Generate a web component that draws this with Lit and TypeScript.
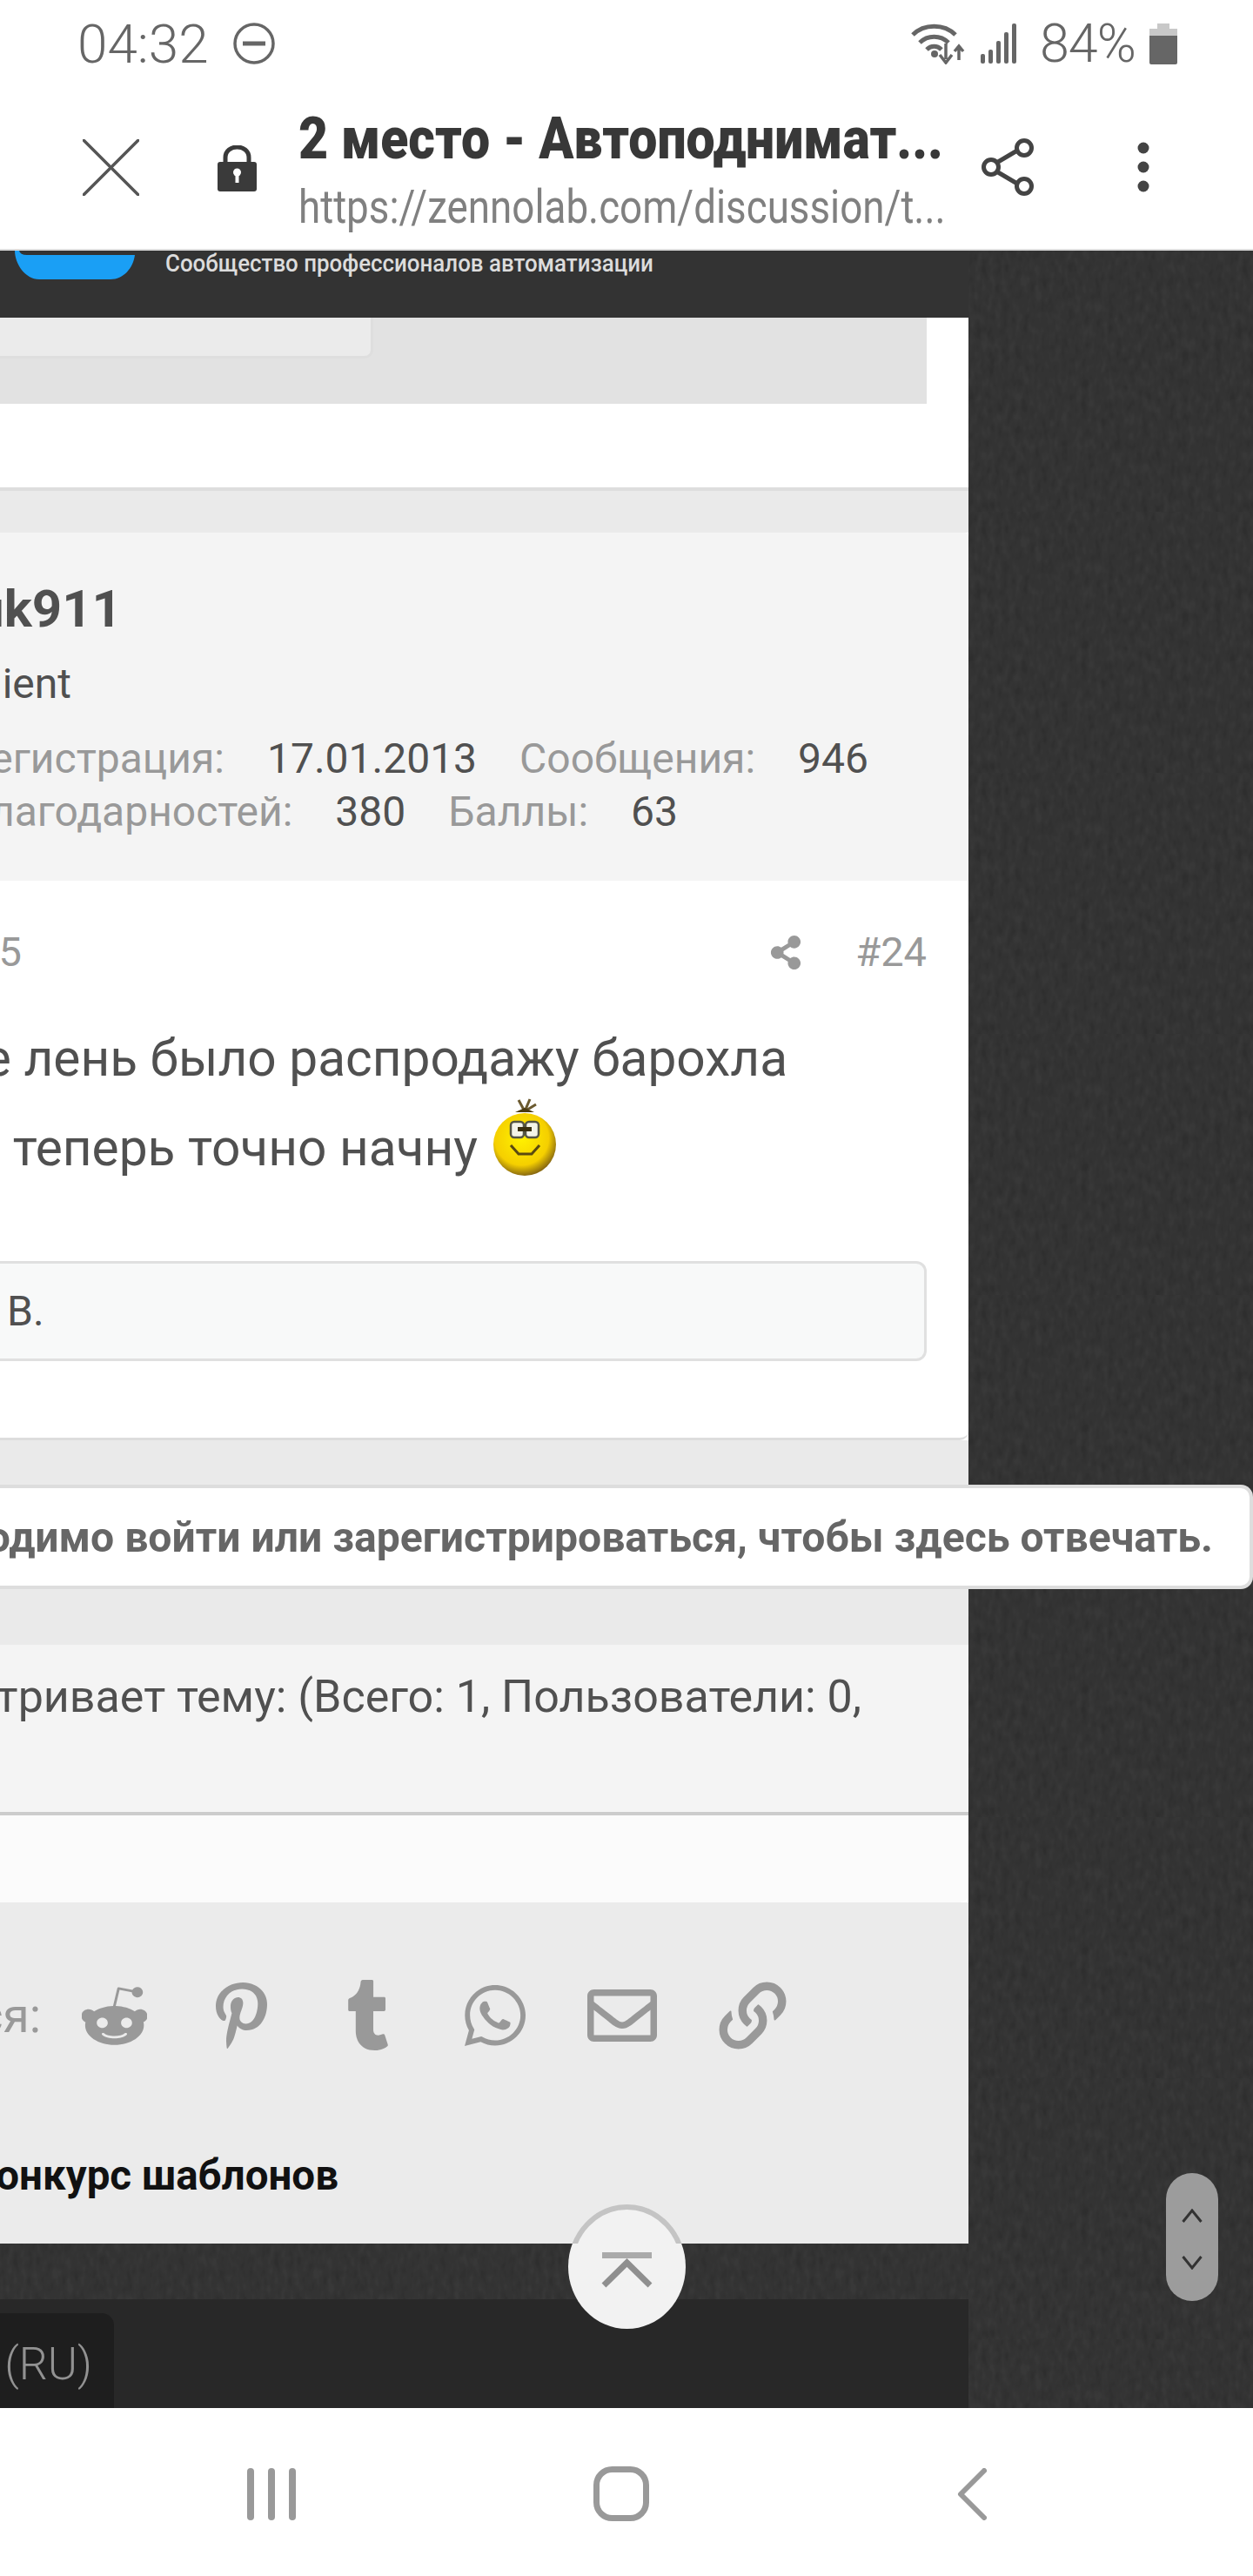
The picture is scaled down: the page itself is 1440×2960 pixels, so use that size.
import { LitElement, html, css, svg } from 'lit'
import { customElement } from 'lit/decorators.js'

const ICON_GRAY = '#999'

const socials = [
  { w: 75, h: 70, box: '22 16 468 472', thin: 0, d: 'M440.3 203.5c-15 0-28.2 6.2-37.9 15.9-35.7-24.7-83.8-40.6-137.1-42.3L293 52.3l88.2 19.8c0 21.6 17.6 39.2 39.2 39.2 22 0 39.7-18.1 39.7-39.7s-17.6-39.7-39.7-39.7c-15.4 0-28.7 9.3-35.3 22l-97.4-21.6c-4.9-1.3-9.7 2.2-11 7.1L246.3 177c-52.9 2.2-100.5 18.1-136.3 42.8-9.7-10.1-23.4-16.3-38.4-16.3-55.6 0-73.8 74.6-22.9 100.1-1.8 7.9-2.6 16.3-2.6 24.7 0 83.8 94.4 151.7 210.3 151.7 116.4 0 210.8-67.9 210.8-151.7 0-8.4-.9-17.2-3.1-25.1 49.9-25.6 31.5-99.7-23.8-99.7zM129.4 308.9c0-22 17.6-39.7 39.7-39.7 21.6 0 39.2 17.6 39.2 39.7 0 21.6-17.6 39.2-39.2 39.2-22 .1-39.7-17.6-39.7-39.2zm214.3 93.5c-36.4 36.4-139.1 36.4-175.5 0-4-3.5-4-9.7 0-13.7 3.5-3.5 9.7-3.5 13.2 0 27.8 28.5 120 29 149 0 3.5-3.5 9.7-3.5 13.2 0 4.1 4 4.1 10.2.1 13.7zm-.8-54.2c-21.6 0-39.2-17.6-39.2-39.2 0-22 17.6-39.7 39.2-39.7 22 0 39.7 17.6 39.7 39.7-.1 21.5-17.7 39.2-39.7 39.2z' },
  { w: 59, h: 78, box: '0 0 384 512', thin: 0, d: 'M204 6.5C101.4 6.5 0 74.9 0 185.6 0 256 39.6 296 63.6 296c9.9 0 15.6-27.6 15.6-35.4 0-9.3-23.7-29.1-23.7-67.8 0-80.4 61.2-137.4 140.4-137.4 68.1 0 118.5 38.7 118.5 109.8 0 53.1-21.3 152.7-90.3 152.7-24.9 0-46.2-18-46.2-43.8 0-37.8 26.4-74.4 26.4-113.4 0-66.2-93.9-54.2-93.9 25.8 0 16.8 2.1 35.4 9.6 50.7-13.8 59.4-42 147.9-42 209.1 0 18.9 2.7 37.5 4.5 56.4 3.4 3.8 1.7 3.4 6.9 1.5 50.4-69 48.6-82.5 71.4-172.8 12.3 23.4 44.1 36 69.3 36 106.2 0 153.9-103.5 153.9-196.8C384 71.3 298.2 6.5 204 6.5z' },
  { w: 48, h: 81, box: '0 0 320 512', thin: 0, d: 'M309.8 480.3c-13.6 14.5-50 31.7-97.4 31.7-120.8 0-147-88.8-147-140.6v-144H17.9c-5.5 0-10-4.5-10-10v-68c0-7.2 4.5-13.6 11.3-16 62-21.8 81.5-76 84.3-117.1.8-11 6.5-16.3 16.1-16.3h70.9c5.5 0 10 4.5 10 10v115.2h83c5.5 0 10 4.4 10 9.9v81.7c0 5.5-4.5 10-10 10h-83.4V360c0 34.2 23.7 53.6 68 35.8 4.8-1.9 9-3.2 12.7-2.2 3.5.9 5.8 3.4 7.4 7.9l22 64.3c1.8 5 3.3 10.6-.4 14.5z' },
  { w: 70, h: 70, box: '0 32 448 448', thin: 0, d: 'M380.9 97.1C339 55.1 283.2 32 223.9 32c-122.4 0-222 99.6-222 222 0 39.1 10.2 77.3 29.6 111L0 480l117.7-30.9c32.4 17.7 68.9 27 106.1 27h.1c122.3 0 224.1-99.6 224.1-222 0-59.3-25.2-115-67.1-157zm-157 341.6c-33.2 0-65.7-8.9-94-25.7l-6.7-4-69.8 18.3L72 359.2l-4.4-7c-18.5-29.4-28.2-63.3-28.2-98.2 0-101.7 82.8-184.5 184.6-184.5 49.3 0 95.6 19.2 130.4 54.1 34.8 34.9 56.2 81.2 56.1 130.5 0 101.8-84.9 184.6-186.6 184.6zm101.2-138.2c-5.5-2.8-32.8-16.2-37.9-18-5.1-1.9-8.8-2.8-12.5 2.8-3.7 5.6-14.3 18-17.6 21.8-3.2 3.7-6.5 4.2-12 1.4-32.6-16.3-54-29.1-75.5-66-5.7-9.8 5.7-9.1 16.3-30.3 1.8-3.7.9-6.9-.5-9.7-1.4-2.8-12.5-30.1-17.1-41.2-4.5-10.8-9.1-9.3-12.5-9.5-3.2-.2-6.9-.2-10.6-.2-3.7 0-9.7 1.4-14.8 6.9-5.1 5.6-19.4 19-19.4 46.3 0 27.3 19.9 53.7 22.6 57.4 2.8 3.7 39.1 59.7 94.8 83.8 35.2 15.2 49 16.5 66.6 13.9 10.7-1.6 32.8-13.4 37.4-26.4 4.6-13 4.6-24.1 3.2-26.4-1.3-2.5-5-3.9-10.5-6.6z' },
  { w: 80, h: 60, box: '0 64 512 384', thin: 0, d: 'M464 64H48C21.49 64 0 85.49 0 112v288c0 26.51 21.49 48 48 48h416c26.51 0 48-21.49 48-48V112c0-26.51-21.49-48-48-48zm0 48v40.805c-22.422 18.259-58.168 46.651-134.587 106.49-16.841 13.247-50.201 45.072-73.413 44.701-23.208.375-56.579-31.459-73.413-44.701C106.18 199.465 70.425 171.067 48 152.805V112h416zM48 400V214.398c22.914 18.251 55.409 43.862 104.938 82.646 21.857 17.205 60.134 55.186 103.062 54.955 42.717.231 80.509-37.199 103.053-54.947 49.528-38.783 82.032-64.401 104.947-82.653V400H48z' },
  { w: 80, h: 80, box: '0 0 512 512', thin: 20, d: 'M326.612 185.391c59.747 59.809 58.927 155.698.36 214.59-.11.12-.24.25-.36.37l-67.2 67.2c-59.27 59.27-155.699 59.262-214.96 0-59.27-59.26-59.27-155.7 0-214.96l37.106-37.106c9.84-9.84 26.786-3.3 27.294 10.606.648 17.722 3.826 35.527 9.69 52.721 1.986 5.822.567 12.262-3.783 16.612l-13.087 13.087c-28.026 28.026-28.905 73.66-1.155 101.96 28.024 28.579 74.086 28.749 102.325.51l67.2-67.19c28.191-28.191 28.073-73.757 0-101.83-3.701-3.694-7.429-6.564-10.341-8.569a16.037 16.037 0 0 1-6.947-12.606c-.396-10.567 3.348-21.456 11.698-29.806l21.054-21.055c5.521-5.521 14.182-6.199 20.584-1.731a152.482 152.482 0 0 1 20.522 17.197zM467.547 44.449c-59.261-59.262-155.69-59.27-214.96 0l-67.2 67.2c-.12.12-.25.25-.36.37-58.566 58.892-59.387 154.781.36 214.59a152.454 152.454 0 0 0 20.521 17.196c6.402 4.468 15.064 3.789 20.584-1.731l21.054-21.055c8.35-8.35 12.094-19.239 11.698-29.806a16.037 16.037 0 0 0-6.947-12.606c-2.912-2.005-6.64-4.875-10.341-8.569-28.073-28.073-28.191-73.639 0-101.83l67.2-67.19c28.239-28.239 74.3-28.069 102.325.51 27.75 28.3 26.872 73.934-1.155 101.96l-13.087 13.087c-4.35 4.35-5.769 10.79-3.783 16.612 5.864 17.194 9.042 34.999 9.69 52.721.509 13.906 17.454 20.446 27.294 10.606l37.106-37.106c59.271-59.259 59.271-155.699.001-214.959z' },
]

@customElement('app-root')
export class AppRoot extends LitElement {
  static styles = css`
    :host {
      display: block;
      width: 1440px;
      height: 2960px;
      overflow: hidden;
      background: white;
      font-family: Roboto, "Liberation Sans", sans-serif;
      color: #505050;
    }

    svg { display: block; flex: none; }

    /* browser chrome */
    .chrome {
      height: 288px;
      box-sizing: border-box;
      border-bottom: 2px solid #ddd;
    }

    .status {
      height: 98px;
      box-sizing: border-box;
      padding: 2px 87px 0 89px;
      display: flex;
      align-items: center;
      justify-content: space-between;
      color: #666;
    }

    .status-left, .status-right { display: flex; align-items: center; }
    .time { width: 179px; font-size: 62px; font-weight: 300; }
    .wifi { margin-right: 17px; }
    .pct { width: 126px; margin-left: 27px; font-size: 61px; font-weight: 300; letter-spacing: -1px; }

    .toolbar {
      height: 188px;
      padding-left: 95px;
      display: flex;
      align-items: center;
    }

    .close { margin-right: 90px; }
    .lock { margin-right: 48px; margin-top: 2px; }
    .titles { width: 740px; align-self: flex-start; margin-top: 25px; white-space: nowrap; }
    .title {
      height: 74px;
      line-height: 74px;
      font-size: 66px;
      font-weight: 900;
      color: #383838;
      transform: scaleX(.894);
      transform-origin: left;
    }
    .url {
      height: 83px;
      line-height: 83px;
      font-size: 53px;
      color: #808080;
      transform: scaleX(.863);
      transform-origin: left;
    }
    .share-top { margin-left: 45px; }
    .dots { margin-left: 117px; }

    /* page */
    .stage { position: relative; height: 2479px; display: flex; }
    .col { width: 1113px; flex: none; }
    .side { flex: 1; }
    .grain {
      background-color: #2c2c2c;
      background-image: url("data:image/svg+xml,%3Csvg xmlns='http://www.w3.org/2000/svg' width='300' height='300'%3E%3Cfilter id='n'%3E%3CfeTurbulence type='fractalNoise' baseFrequency='.13 .07' numOctaves='2' stitchTiles='stitch'/%3E%3CfeColorMatrix values='0 0 0 0 1 0 0 0 0 1 0 0 0 0 1 0 0 0 .07 0'/%3E%3C/filter%3E%3Crect width='300' height='300' filter='url(%23n)'/%3E%3C/svg%3E");
    }

    .right { display: flex; justify-content: flex-end; white-space: nowrap; }

    .brand { height: 77px; background: #333; display: flex; align-items: flex-start; }
    .logo { margin-left: 17px; }
    .tagline {
      margin-left: 35px;
      height: 29px;
      line-height: 29px;
      font-size: 28px;
      font-weight: 500;
      color: #dcdcdc;
      white-space: nowrap;
      transform: scaleX(.925);
      transform-origin: left;
    }

    .prev { height: 195px; background: white; }
    .prev-box { width: 1065px; height: 99px; background: #e2e2e2; }
    .prev-inner {
      width: 429px;
      height: 47px;
      box-sizing: border-box;
      background: #ebebeb;
      border-right: 3px solid #dedede;
      border-bottom: 3px solid #dedede;
      border-radius: 0 0 10px 0;
    }

    .gap { height: 48px; background: #eaeaea; border-top: 4px solid #ddd; }

    .profile {
      height: 400px;
      box-sizing: border-box;
      padding-top: 53px;
      background: #f4f4f4;
      border-radius: 0 5px 0 0;
    }
    .name { width: 140px; height: 70px; line-height: 70px; font-size: 60px; font-weight: 700; }
    .role { width: 82px; height: 60px; line-height: 60px; margin-top: 21px; font-size: 48px; }
    .stat { height: 61px; line-height: 61px; gap: 49px; font-size: 48px; }
    .stat-a { width: 998px; margin-top: 25px; }
    .stat-b { width: 779px; }
    .label { color: #999; }

    .post {
      height: 643px;
      box-sizing: border-box;
      padding-top: 52px;
      background: white;
      border-bottom: 3px solid #ddd;
      border-radius: 0 0 10px 0;
    }
    .meta { height: 60px; line-height: 60px; font-size: 47px; color: #999; display: flex; align-items: center; justify-content: space-between; padding-right: 48px; }
    .date { width: 25px; }
    .meta-right { display: flex; align-items: center; }
    .num { margin-left: 62px; }
    .body { margin-top: 41px; font-size: 58.6px; line-height: 103px; height: 103px; }
    .body-a { width: 905px; }
    .body-b { width: 640px; gap: 17px; align-items: flex-start; }
    .smiley { margin-top: -7px; }
    .quote {
      width: 1065px;
      height: 115px;
      box-sizing: border-box;
      margin-top: 78px;
      border: 3px solid #e0e0e0;
      border-left: 0;
      border-radius: 0 12px 12px 0;
      background: #f8f9f9;
      font-size: 48px;
      line-height: 109px;
      padding-left: 8px;
    }
    .body + .body { margin-top: 0; }

    .notice { height: 235px; padding-top: 51px; box-sizing: border-box; background: #eaeaea; }
    .login {
      position: relative;
      z-index: 1;
      width: 1440px;
      height: 120px;
      box-sizing: border-box;
      padding-right: 42px;
      align-items: center;
      background: white;
      border: 4px solid #ddd;
      border-left: 0;
      border-radius: 0 14px 14px 0;
      font-size: 48.1px;
      font-weight: 700;
      color: #666;
    }

    .viewers {
      height: 192px;
      box-sizing: border-box;
      padding-top: 30px;
      background: #f4f4f4;
      font-size: 52px;
      line-height: 60px;
    }
    .viewers .right { width: 990px; }
    .viewers-foot {
      height: 104px;
      box-sizing: border-box;
      background: #fbfbfb;
      border-top: 4px solid #ccc;
      border-radius: 0 0 10px 0;
    }

    .shares { height: 392px; box-sizing: border-box; padding-top: 89px; background: #ebebeb; }
    .share-row { height: 81px; display: flex; align-items: center; }
    .share-label {
      width: 47px;
      height: 82px;
      line-height: 82px;
      align-self: flex-start;
      margin-right: 11px;
      font-size: 55px;
      color: #999;
    }
    .slot { width: 146px; display: flex; justify-content: center; }
    .slot:last-child { padding-left: 4px; }
    .next { width: 389px; height: 60px; line-height: 60px; margin-top: 114px; font-size: 47.5px; font-weight: 700; color: #111; }

    .foot-gap { height: 64px; }
    .foot { height: 125px; padding-top: 16px; box-sizing: border-box; background: #282828; }
    .lang {
      width: 131px;
      height: 109px;
      box-sizing: border-box;
      padding: 35px 25px 0 0;
      background: #1e1e1e;
      border-radius: 0 14px 0 0;
      font-size: 52px;
      font-weight: 300;
      line-height: 48px;
      color: #929292;
    }

    /* floating controls */
    .to-top { position: absolute; left: 653px; top: 2245px; }
    .scroller {
      position: absolute;
      left: 1340px;
      top: 2209px;
      width: 60px;
      height: 147px;
      border-radius: 30px;
      background: #9c9c9c;
      display: flex;
      flex-direction: column;
      align-items: center;
      gap: 38px;
      padding-top: 41px;
      box-sizing: border-box;
    }

    .nav {
      height: 193px;
      box-sizing: border-box;
      padding: 69px 0 0 284px;
      background: white;
      display: flex;
      align-items: flex-start;
    }
    .nav-home { margin-left: 342px; margin-top: -2px; }
    .nav-back { margin-left: 354px; }
  `

  private statusIcons() {
    return html`
      <svg class="wifi" width="63" height="48" viewBox="0 0 63 48" fill="none" stroke="#666">
        <path d="M2 14C15 1 38 1 51 14" stroke-width="5" />
        <path d="M10 23C19 14 34 14 43 23" stroke-width="5" />
        <path d="M18 31C23 26 30 26 35 31" stroke-width="5" />
        <circle cx="27" cy="36" r="4" fill="#666" stroke="none" />
        <path d="M40 24V42M33 37L40 46L47 37" stroke-width="3.5" />
        <path d="M55 43V29M50 33L55 27L60 33" stroke-width="3.5" />
      </svg>
      <svg width="41" height="46" viewBox="0 0 41 46" fill="#666">
        <rect x="0" y="35" width="5" height="11" rx="2" />
        <rect x="9" y="30" width="5" height="16" rx="2" />
        <rect x="18" y="20" width="5" height="26" rx="2" />
        <rect x="27" y="10" width="5" height="36" rx="2" />
        <rect x="36" y="0" width="5" height="46" rx="2" />
      </svg>
    `
  }

  private smiley() {
    return html`
      <svg class="smiley" width="74" height="91" viewBox="0 0 74 91">
        <defs>
          <radialGradient id="face" cx=".45" cy=".4" r=".6">
            <stop offset="0" stop-color="#fff200" />
            <stop offset=".72" stop-color="#f5cf00" />
            <stop offset="1" stop-color="#8a6a10" />
          </radialGradient>
        </defs>
        <path d="M30 3L37 16M43 2L37 16M50 8L37 16" fill="none" stroke="#6b5a30" stroke-width="3" />
        <path d="M26 17L37 12L48 17Z" fill="#4a3a10" />
        <circle cx="37" cy="54" r="36" fill="url(#face)" />
        <rect x="21" y="28" width="15" height="18" rx="4" fill="#f4f4e8" stroke="#554" stroke-width="2.5" />
        <rect x="38" y="28" width="15" height="18" rx="4" fill="#f4f4e8" stroke="#554" stroke-width="2.5" />
        <rect x="29" y="34" width="16" height="5" fill="#3a3010" />
        <path d="M21 55L30 65H45L54 55" fill="none" stroke="#5a4a10" stroke-width="3" />
      </svg>
    `
  }

  render() {
    return html`
      <div class="chrome">
        <div class="status">
          <div class="status-left">
            <div class="time">04:32</div>
            <svg width="48" height="48" viewBox="0 0 48 48" fill="none" stroke="#666" stroke-width="3.5">
              <ellipse cx="24" cy="24" rx="22" ry="22" />
              <path d="M11 24H37" stroke-width="5" />
            </svg>
          </div>
          <div class="status-right">
            ${this.statusIcons()}
            <div class="pct">84%</div>
            <svg width="32" height="47" viewBox="0 0 32 47">
              <path d="M9 0H23V6H32V14H0V6H9Z" fill="#c8c8c8" />
              <path d="M0 14H32V45a2 2 0 0 1-2 2H2a2 2 0 0 1-2-2Z" fill="#666" />
            </svg>
          </div>
        </div>
        <div class="toolbar">
          <svg class="close" width="65" height="65" viewBox="0 0 65 65" stroke="#555" stroke-width="3.5" stroke-linecap="round">
            <path d="M1 1L64 64M64 1L1 64" />
          </svg>
          <svg class="lock" width="45" height="53" viewBox="0 0 45 53">
            <path d="M9 22V14C9 -2 36 -2 36 14V22" fill="none" stroke="#3a3a3a" stroke-width="5" />
            <rect x="0" y="19" width="45" height="34" rx="3" fill="#3a3a3a" />
            <circle cx="22.5" cy="31" r="4.5" fill="#fff" />
            <rect x="20.5" y="31" width="4" height="12" fill="#fff" />
          </svg>
          <div class="titles">
            <div class="title">2 место - Автоподнимат...</div>
            <div class="url">https://zennolab.com/discussion/t...</div>
          </div>
          <svg class="share-top" width="62" height="66" viewBox="0 0 62 66" fill="none" stroke="#444" stroke-width="5">
            <path d="M19 27L41 14M19 39L41 52" />
            <circle cx="11" cy="33" r="8.5" />
            <circle cx="49" cy="11" r="8.5" />
            <circle cx="49" cy="55" r="8.5" />
          </svg>
          <svg class="dots" width="14" height="58" viewBox="0 0 14 58" fill="#444">
            <circle cx="7" cy="7" r="6.5" />
            <circle cx="7" cy="29" r="6.5" />
            <circle cx="7" cy="51" r="6.5" />
          </svg>
        </div>
      </div>

      <div class="stage">
        <div class="col">
          <div class="brand">
            <svg class="logo" width="138" height="33" viewBox="0 0 138 33">
              <path d="M0 0H5Q6 5 14 5H138C136 20 125 33 110 33H28C12 33 0 15 0 0Z" fill="#1a9ff5" />
            </svg>
            <div class="tagline">Сообщество профессионалов автоматизации</div>
          </div>
          <div class="prev">
            <div class="prev-box"><div class="prev-inner"></div></div>
          </div>
          <div class="gap"></div>

          <div class="profile">
            <div class="right name">uk911</div>
            <div class="right role">Client</div>
            <div class="right stat stat-a">
              <span class="label">Регистрация:</span><span>17.01.2013</span>
              <span class="label">Сообщения:</span><span>946</span>
            </div>
            <div class="right stat stat-b">
              <span class="label">Благодарностей:</span><span>380</span>
              <span class="label">Баллы:</span><span>63</span>
            </div>
          </div>

          <div class="post">
            <div class="meta">
              <div class="right date">5</div>
              <div class="meta-right">
                <svg width="36" height="39" viewBox="0 0 448 512" fill="${ICON_GRAY}">
                  <path d="M352 320c-22.608 0-43.387 7.819-59.79 20.895l-102.486-64.054a96.551 96.551 0 0 0 0-41.683l102.486-64.054C308.613 184.181 329.392 192 352 192c53.019 0 96-42.981 96-96S405.019 0 352 0s-96 42.981-96 96c0 7.158.79 14.13 2.276 20.841L155.79 180.895C139.387 167.819 118.608 160 96 160c-53.019 0-96 42.981-96 96s42.981 96 96 96c22.608 0 43.387-7.819 59.79-20.895l102.486 64.054A96.301 96.301 0 0 0 256 416c0 53.019 42.981 96 96 96s96-42.981 96-96-42.981-96-96-96z" />
                </svg>
                <div class="num">#24</div>
              </div>
            </div>
            <div class="right body body-a">е лень было распродажу барохла</div>
            <div class="right body body-b"><span>теперь точно начну</span>${this.smiley()}</div>
            <div class="quote">В.</div>
          </div>

          <div class="notice">
            <div class="right login">Необходимо войти или зарегистрироваться, чтобы здесь отвечать.</div>
          </div>

          <div class="viewers">
            <div class="right">Сейчас просматривает тему: (Всего: 1, Пользователи: 0,</div>
          </div>
          <div class="viewers-foot"></div>

          <div class="shares">
            <div class="share-row">
              <div class="right share-label">Поделиться:</div>
              ${socials.map(
                (s) => html`
                  <div class="slot">
                    <svg width="${s.w}" height="${s.h}" viewBox="${s.box}" preserveAspectRatio="none" fill="${ICON_GRAY}">
                      ${svg`<path d="${s.d}" stroke="#ebebeb" stroke-width="${s.thin}" />`}
                    </svg>
                  </div>
                `,
              )}
            </div>
            <div class="right next">Конкурс шаблонов</div>
          </div>

          <div class="foot-gap grain"></div>
          <div class="foot">
            <div class="right lang">Русский (RU)</div>
          </div>
        </div>
        <div class="side grain"></div>

        <svg class="to-top" width="135" height="143" viewBox="0 0 135 143">
          <defs>
            <clipPath id="arch"><rect width="135" height="45" /></clipPath>
          </defs>
          <ellipse cx="67.5" cy="71.5" rx="67.5" ry="71.5" fill="#f2f2f2" />
          <ellipse cx="67.5" cy="71.5" rx="64.5" ry="68.5" fill="none" stroke="#c4c4c4" stroke-width="6" clip-path="url(#arch)" />
          <rect x="39" y="55" width="57" height="7" fill="#aaa" />
          <path d="M41 93L67.5 67L94 93" fill="none" stroke="#8f8f8f" stroke-width="7" />
        </svg>

        <div class="scroller">
          <svg width="24" height="16" viewBox="0 0 24 16" fill="none" stroke="#333" stroke-width="3">
            <path d="M1.5 15L12 2L22.5 15" />
          </svg>
          <svg width="24" height="16" viewBox="0 0 24 16" fill="none" stroke="#333" stroke-width="3">
            <path d="M1.5 1L12 14L22.5 1" />
          </svg>
        </div>
      </div>

      <div class="nav">
        <svg width="56" height="60" viewBox="0 0 56 60" fill="${ICON_GRAY}">
          <rect x="0" y="0" width="8" height="60" rx="4" />
          <rect x="24" y="0" width="8" height="60" rx="4" />
          <rect x="48" y="0" width="8" height="60" rx="4" />
        </svg>
        <svg class="nav-home" width="64" height="63" viewBox="0 0 64 63" fill="none" stroke="${ICON_GRAY}" stroke-width="7">
          <rect x="3.5" y="3.5" width="57" height="56" rx="18" />
        </svg>
        <svg class="nav-back" width="34" height="60" viewBox="0 0 34 60" fill="none" stroke="${ICON_GRAY}" stroke-width="6" stroke-linecap="round" stroke-linejoin="round">
          <path d="M31 3L4 30L31 57" />
        </svg>
      </div>
    `
  }
}

declare global {
  interface HTMLElementTagNameMap {
    'app-root': AppRoot
  }
}
